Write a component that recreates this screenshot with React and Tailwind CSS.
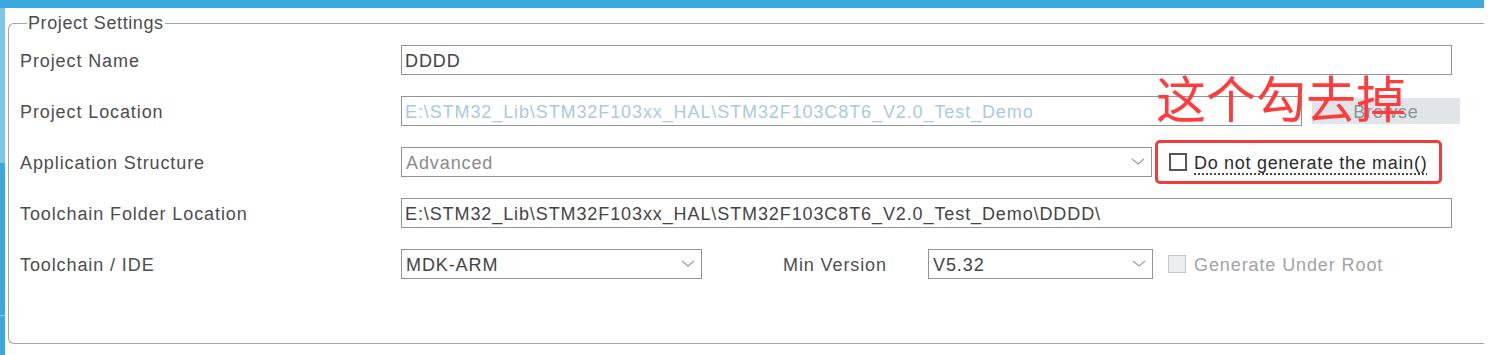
import { useState } from "react";

const font = { fontFamily: '"Liberation Sans", Arial, sans-serif' };

const Chevron = () => (
    <svg width="14" height="8" viewBox="0 0 14 8" className="shrink-0">
        <polyline points="1,1 7,6 13,1" fill="none" stroke="#9aa0a6" strokeWidth="1.3" />
    </svg>
);

const TextBox = ({ value, width, color = "text-[#444]" }) => (
    <div className={`h-[30px] ${width} border border-[#8e949a] bg-white flex items-center pt-[2px] px-[3px] ${color} overflow-hidden whitespace-nowrap`}>
        {value}
    </div>
);

const Select = ({ value, width, color = "text-[#444]" }) => (
    <div className={`h-[30px] ${width} border border-[#8e949a] bg-white flex items-center justify-between pl-[4px] pr-[6px] ${color}`}>
        <span className="pt-[2px]">{value}</span>
        <Chevron />
    </div>
);

const Row = ({ label, children }) => (
    <div className="h-[30px] flex items-center">
        <div className="w-[381px] shrink-0 pt-[2px] text-[#4d4d4d]">{label}</div>
        {children}
    </div>
);

const App = () => {
    const [noMain, setNoMain] = useState(false);

    return (
        <div className="w-[1498px] h-[355px] bg-white overflow-hidden relative text-[18px] leading-[21px] tracking-[0.9px]" style={font}>
            <div className="w-[1484px] h-full flex flex-col">
                <div className="h-[8px] bg-[#3ba9dc] shrink-0" />
                <div className="flex flex-1">
                    <div className="w-[5px] flex flex-col shrink-0">
                        <div className="h-[155px] bg-[#7dc5ea]" />
                        <div className="h-[152px] bg-[#3ba9dc]" />
                        <div className="h-px bg-[#8fcdec]" />
                        <div className="flex-1 bg-[#3ba9dc]" />
                    </div>
                    <fieldset className="ml-[3px] mt-[5px] flex-1 h-[331px] border border-r-0 border-[#9fa4a9] rounded-l-[6px] pl-[11px] pt-[11px]">
                        <legend className="ml-[7px] px-[1px] text-[#4d4d4d] tracking-[0.6px]">Project Settings</legend>
                        <div className="flex flex-col gap-[21px]">
                            <Row label="Project Name">
                                <TextBox value="DDDD" width="w-[1051px]" />
                            </Row>
                            <Row label="Project Location">
                                <TextBox
                                    value="E:\STM32_Lib\STM32F103xx_HAL\STM32F103C8T6_V2.0_Test_Demo"
                                    width="w-[901px]"
                                    color="text-[#a9c9e6]"
                                />
                                <button className="ml-[10px] w-[148px] h-[26px] pt-[2px] bg-[#e1e4e8] text-[#8d9297] flex items-center justify-center">
                                    Browse
                                </button>
                            </Row>
                            <Row label="Application Structure">
                                <Select value="Advanced" width="w-[751px]" color="text-[#8a8a8a]" />
                                <div className="ml-[3px] h-[44px] w-[287px] border-[3px] border-[#f23b3b] rounded-[5px] flex items-center pl-[11px]">
                                    <button
                                        onClick={() => setNoMain(!noMain)}
                                        className="w-[18px] h-[18px] border-2 border-[#555] bg-white flex items-center justify-center shrink-0"
                                    >
                                        {noMain && <span className="w-[8px] h-[8px] bg-[#555]" />}
                                    </button>
                                    <span className="ml-[7px] pt-[2px] text-[#2b2b2b] tracking-[0.7px] underline decoration-dotted decoration-[#333] underline-offset-[5px] whitespace-nowrap">
                                        Do not generate the main()
                                    </span>
                                </div>
                            </Row>
                            <Row label="Toolchain Folder Location">
                                <TextBox
                                    value="E:\STM32_Lib\STM32F103xx_HAL\STM32F103C8T6_V2.0_Test_Demo\DDDD\"
                                    width="w-[1051px]"
                                />
                            </Row>
                            <Row label="Toolchain / IDE">
                                <Select value="MDK-ARM" width="w-[301px]" />
                                <div className="ml-[81px] w-[145px] shrink-0 pt-[2px] text-[#4d4d4d]">Min Version</div>
                                <Select value="V5.32" width="w-[225px]" />
                                <div className="ml-[15px] w-[18px] h-[18px] border border-[#c3c7cb] bg-[#eceef1] shrink-0" />
                                <span className="ml-[8px] pt-[2px] text-[#a3a3a3] whitespace-nowrap">Generate Under Root</span>
                            </Row>
                        </div>
                    </fieldset>
                </div>
            </div>
            <div
                className="absolute left-[1156px] top-[66px] text-[50px] leading-[60px] tracking-normal text-[#ff3b3b]"
                style={{ fontFamily: '"Noto Sans CJK SC", sans-serif' }}
            >
                这个勾去掉
            </div>
        </div>
    );
};

export default App;
